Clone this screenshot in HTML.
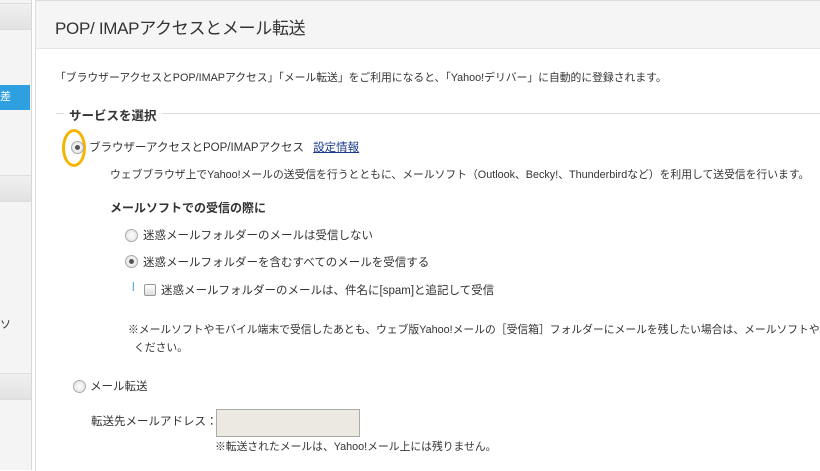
<!DOCTYPE html>
<html><head><meta charset="utf-8"><style>
body{margin:0;width:820px;height:470px;overflow:hidden;background:#fff;font-family:"Liberation Sans","Noto Sans CJK JP",sans-serif;color:#333;font-size:11.5px;position:relative}
.a{position:absolute;white-space:nowrap}
.side{position:absolute;left:0;top:0;width:31px;height:470px;background:#f4f4f4;border-right:1px solid #d8d8d8}
.band{position:absolute;left:0;width:31px;height:25px;background:linear-gradient(#f0f0f0,#e2e2e2);border-top:1px solid #ddd;border-bottom:1px solid #ddd}
.main{position:absolute;left:35px;top:0;width:784px;height:470px;border-left:1px solid #ddd;border-top:1px solid #ddd;overflow:hidden}
.hdr{position:absolute;left:0;top:0;width:785px;height:47px;background:#f5f5f5;border-bottom:1px solid #e6e6e6}
.r{position:absolute;width:11px;height:11px;border-radius:50%;border:1px solid #aaa;background:radial-gradient(#fff,#ddd)}
.r.on::after{content:"";position:absolute;left:3px;top:3px;width:5px;height:5px;border-radius:50%;background:#555}
</style></head><body>
<div class="side">
<div class="band" style="top:3px"></div>
<div style="position:absolute;left:0;top:85px;width:30px;height:25px;background:#2e9fe0;color:#fff;font-size:11px;line-height:25px">差</div>
<div class="band" style="top:175px"></div>
<div class="a" style="left:0;top:316px;font-size:11px">ソ</div>
<div class="band" style="top:373px"></div>
</div>
<div class="main">
<div class="hdr"></div>
<div class="a" style="left:19px;top:13px;font-size:17px;letter-spacing:-0.3px;color:#333">POP/ IMAPアクセスとメール転送</div>
<div class="a" style="left:19px;top:68px;font-size:10.8px">「ブラウザーアクセスとPOP/IMAPアクセス」「メール転送」をご利用になると、「Yahoo!デリバー」に自動的に登録されます。</div>
<div style="position:absolute;left:20px;top:112px;width:765px;border-top:1px solid #ddd"></div>
<div class="a" style="left:28px;top:104px;background:#fff;padding:0 5px;font-size:12.5px;font-weight:bold">サービスを選択</div>
<div style="position:absolute;left:26px;top:128px;width:18px;height:32px;border:3px solid #f5b400;border-radius:50%"></div>
<div class="r on" style="left:35px;top:140px"></div>
<div class="a" style="left:53px;top:138px;font-size:11.5px">ブラウザーアクセスとPOP/IMAPアクセス <a style="color:#1a3b8c;text-decoration:underline;margin-left:6px">設定情報</a></div>
<div class="a" style="left:74px;top:165px;font-size:10.8px">ウェブブラウザ上でYahoo!メールの送受信を行うとともに、メールソフト（Outlook、Becky!、Thunderbirdなど）を利用して送受信を行います。</div>
<div class="a" style="left:74px;top:198px;font-size:12px;font-weight:bold">メールソフトでの受信の際に</div>
<div class="r" style="left:89px;top:228px"></div>
<div class="a" style="left:107px;top:226px">迷惑メールフォルダーのメールは受信しない</div>
<div class="r on" style="left:89px;top:254px"></div>
<div class="a" style="left:107px;top:253px">迷惑メールフォルダーを含むすべてのメールを受信する</div>
<div class="a" style="left:96px;top:281px;color:#3aa0e0">l</div>
<div style="position:absolute;left:108px;top:283px;width:10px;height:10px;border:1px solid #999;border-radius:2px;background:linear-gradient(#fff,#ddd)"></div>
<div class="a" style="left:125px;top:281px">迷惑メールフォルダーのメールは、件名に[spam]と追記して受信</div>
<div class="a" style="left:92px;top:320px;font-size:10.8px;line-height:18px">※メールソフトやモバイル端末で受信したあとも、ウェブ版Yahoo!メールの［受信箱］フォルダーにメールを残したい場合は、メールソフトやモバ<br>&nbsp;&nbsp;ください。</div>
<div class="r" style="left:37px;top:379px"></div>
<div class="a" style="left:54px;top:377px">メール転送</div>
<div class="a" style="left:55px;top:412px">転送先メールアドレス：</div>
<div style="position:absolute;left:180px;top:408px;width:142px;height:26px;background:#ebe9e2;border:1px solid #aaa"></div>
<div class="a" style="left:179px;top:437px;font-size:10.8px">※転送されたメールは、Yahoo!メール上には残りません。</div>
</div>
</body></html>
